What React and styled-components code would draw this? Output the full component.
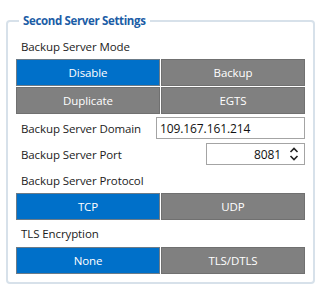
import React from 'react'
import styled, { createGlobalStyle } from 'styled-components'

const GlobalStyle = createGlobalStyle`
  html, body {
    margin: 0;
    padding: 0;
    background: #fff;
  }
  body {
    font-family: "Open Sans", "Noto Sans", "Liberation Sans", sans-serif;
    font-size: 11.5px;
    letter-spacing: -0.1px;
    color: #1b1b1b;
  }
`

const Page = styled.div`
  width: 326px;
  height: 302px;
  box-sizing: border-box;
  padding: 13px 11px 0 6px;
`

const Group = styled.fieldset`
  margin: 0;
  padding: 5px 8px 8px 8px;
  border: 2px solid #d7e1ea;
  border-radius: 4px;
  min-width: 0;
`

const Title = styled.legend`
  margin-left: 3px;
  padding: 0 4px;
  font-size: 11.5px;
  font-weight: 700;
  letter-spacing: -0.35px;
  color: #1c5da6;
  line-height: 16px;
`

const Label = styled.div`
  height: ${p => p.$h || 26}px;
  display: flex;
  align-items: center;
  padding-left: 5px;
  white-space: nowrap;
`

const Segments = styled.div`
  display: grid;
  grid-template-columns: 1fr 1fr;
  gap: 1px;
`

const Segment = styled.button`
  height: 27px;
  margin: 0;
  padding: 0;
  border: 1px solid ${p => (p.$active ? '#6b7b88' : '#707070')};
  background: ${p => (p.$active ? '#0070c9' : '#808080')};
  color: #fff;
  font-family: inherit;
  font-size: 11.5px;
  letter-spacing: inherit;
  cursor: pointer;
`

const FieldRow = styled.div`
  height: 26px;
  display: flex;
  align-items: center;
  justify-content: space-between;
`

const TextInput = styled.input`
  box-sizing: border-box;
  width: 149px;
  height: 22px;
  margin: 0;
  padding: 0 3px;
  border: 1px solid #a4a4a4;
  font-family: inherit;
  font-size: 12px;
  letter-spacing: inherit;
  color: #111;
  outline: none;
`

const Spin = styled.div`
  box-sizing: border-box;
  width: 99px;
  height: 22px;
  display: flex;
  align-items: center;
  border: 1px solid #a4a4a4;
`

const SpinValue = styled.span`
  flex: 1;
  text-align: right;
  padding-right: 8px;
  font-size: 12px;
  color: #111;
`

const SpinArrows = styled.svg`
  width: 10px;
  height: 16px;
  margin-right: 5px;
`

const Choice = ({ options, value }) => (
  <Segments>
    {options.map(o => (
      <Segment key={o} $active={o === value}>{o}</Segment>
    ))}
  </Segments>
)

export default function App() {
  return (
    <>
      <GlobalStyle />
      <Page>
        <Group>
          <Title>Second Server Settings</Title>
          <Label $h={25}>Backup Server Mode</Label>
          <Choice options={['Disable', 'Backup', 'Duplicate', 'EGTS']} value="Disable" />
          <FieldRow style={{ marginTop: 1 }}>
            <Label>Backup Server Domain</Label>
            <TextInput defaultValue="109.167.161.214" />
          </FieldRow>
          <FieldRow>
            <Label>Backup Server Port</Label>
            <Spin>
              <SpinValue>8081</SpinValue>
              <SpinArrows viewBox="0 0 10 16">
                <path d="M1.5 6 L5 2.5 L8.5 6" fill="none" stroke="#222" strokeWidth="1.6" />
                <path d="M1.5 10 L5 13.5 L8.5 10" fill="none" stroke="#222" strokeWidth="1.6" />
              </SpinArrows>
            </Spin>
          </FieldRow>
          <Label>Backup Server Protocol</Label>
          <Choice options={['TCP', 'UDP']} value="TCP" />
          <Label $h={27}>TLS Encryption</Label>
          <Choice options={['None', 'TLS/DTLS']} value="None" />
        </Group>
      </Page>
    </>
  )
}
